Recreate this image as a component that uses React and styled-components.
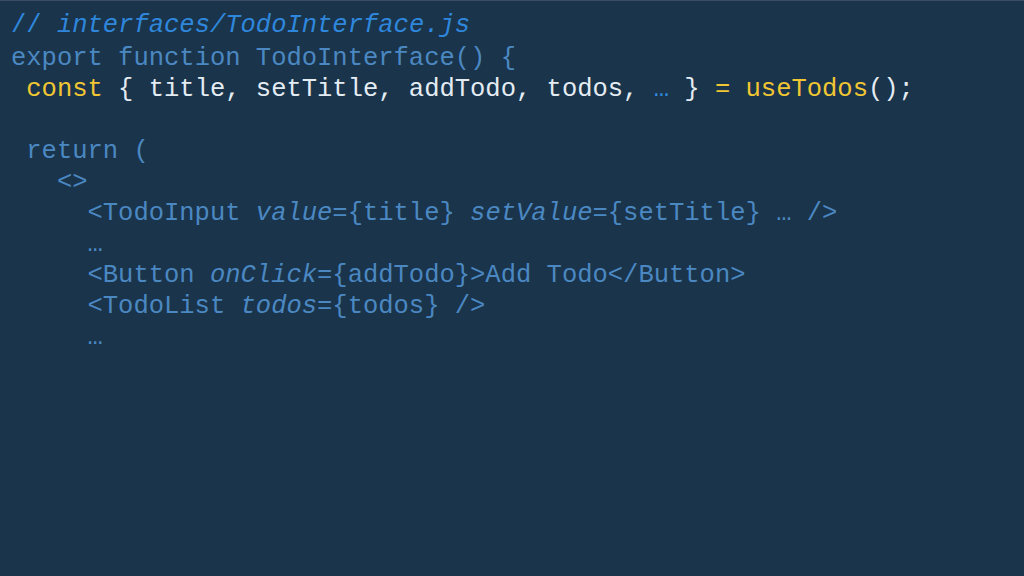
import React from 'react';
import styled, { createGlobalStyle } from 'styled-components';

const GlobalStyle = createGlobalStyle`
  html, body {
    margin: 0;
    padding: 0;
    background: #1a344b;
  }
`;

const lines = [
  { indent: 0, tokens: [['comment', '// '], ['commentItalic', 'interfaces/TodoInterface.js']] },
  { indent: 0, tokens: [['code', 'export function TodoInterface() {']] },
  {
    indent: 1,
    tokens: [
      ['keyword', 'const'],
      ['plain', ' { title, setTitle, addTodo, todos, '],
      ['comment', '…'],
      ['plain', ' } '],
      ['keyword', '= useTodos'],
      ['plain', '();'],
    ],
  },
  { indent: 0, tokens: [] },
  { indent: 1, tokens: [['code', 'return (']] },
  { indent: 3, tokens: [['code', '<>']] },
  {
    indent: 5,
    tokens: [
      ['code', '<TodoInput '],
      ['attr', 'value'],
      ['code', '={title} '],
      ['attr', 'setValue'],
      ['code', '={setTitle} … />'],
    ],
  },
  { indent: 5, tokens: [['code', '…']] },
  {
    indent: 5,
    tokens: [
      ['code', '<Button '],
      ['attr', 'onClick'],
      ['code', '={addTodo}>Add Todo</Button>'],
    ],
  },
  {
    indent: 5,
    tokens: [
      ['code', '<TodoList '],
      ['attr', 'todos'],
      ['code', '={todos} />'],
    ],
  },
  { indent: 5, tokens: [['code', '…']] },
];

export default function App() {
  return (
    <>
      <GlobalStyle />
      <Slide>
        <CodeBlock>
          {lines.map((line, i) => (
            <Line key={i} indent={line.indent} first={i === 0}>
              {line.tokens.length === 0
                ? '\u00a0'
                : line.tokens.map(([kind, text], j) => (
                    <Token key={j} kind={kind}>
                      {text}
                    </Token>
                  ))}
            </Line>
          ))}
        </CodeBlock>
      </Slide>
    </>
  );
}

const colors = {
  comment: '#2f87dc',
  commentItalic: '#2f87dc',
  code: '#4b88c2',
  attr: '#4b88c2',
  plain: '#e4ecf3',
  keyword: '#f1c633',
};

const Slide = styled.div`
  width: 1024px;
  height: 576px;
  box-sizing: border-box;
  background: #1a344b;
  border-top: 1px solid #3b4b61;
  overflow: hidden;
`;

const CodeBlock = styled.pre`
  margin: 0;
  padding: 9px 0 0 11px;
  font-family: 'Liberation Mono', 'DejaVu Sans Mono', monospace;
  font-size: 25.5px;
  line-height: 31px;
  white-space: pre;
`;

const Line = styled.div`
  height: ${({ first }) => (first ? 33 : 31)}px;
  padding-left: ${({ indent }) => indent * 15.3}px;
`;

const Token = styled.span`
  color: ${({ kind }) => colors[kind]};
  font-style: ${({ kind }) => (kind === 'attr' || kind === 'commentItalic' ? 'italic' : 'normal')};
`;
